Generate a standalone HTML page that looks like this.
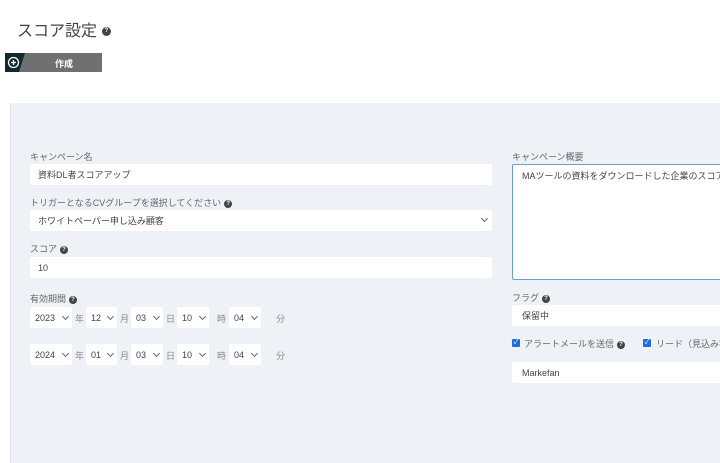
<!DOCTYPE html>
<html><head><meta charset="utf-8"><style>
*{box-sizing:border-box;margin:0;padding:0}
body{width:720px;height:456px;overflow:hidden;background:#fff;font-family:"Liberation Sans","Noto Sans CJK JP",sans-serif;color:#333;position:relative}
.a{position:absolute}
.lbl{position:absolute;font-size:9px;color:#666;white-space:nowrap}
.in{position:absolute;background:#fff;border-radius:2px;font-size:9px;color:#444;padding-left:8px;display:flex;align-items:center;white-space:nowrap;overflow:hidden}
.s{padding-left:5px}
.q{display:inline-block;width:8px;height:8px;border-radius:50%;background:#444;color:#fff;font-size:6px;line-height:8px;text-align:center;font-weight:bold;vertical-align:middle;margin-left:3px}
.chev{position:absolute;width:5px;height:5px;border-right:1px solid #666;border-bottom:1px solid #666;transform:rotate(45deg)}
.u{position:absolute;font-size:9px;color:#888}
.cb{position:absolute;width:8px;height:8px;background:#1a6fd8;border-radius:1px;color:#fff;font-size:7px;line-height:8px;text-align:center}
</style></head><body>
<div class="a" style="left:17px;top:17px;font-size:16px;color:#444">スコア設定<span class="q" style="width:9px;height:9px;line-height:9px;margin-left:5px">?</span></div>
<div class="a" style="left:5px;top:53px;width:97px;height:19px;background:#6e7072"></div>
<div class="a" style="left:5px;top:53px;width:20px;height:19px;background:#13292f;clip-path:polygon(0 0,100% 0,70% 100%,0 100%)"></div>
<svg class="a" style="left:7px;top:56px" width="13" height="13" viewBox="0 0 13 13"><circle cx="6.5" cy="6.5" r="5" fill="none" stroke="#fff" stroke-width="1.3"/><path d="M6.5 4v5M4 6.5h5" stroke="#fff" stroke-width="1.3"/></svg>
<div class="a" style="left:55px;top:57px;font-size:9px;color:#fff;font-weight:bold">作成</div>

<div class="a" style="left:10px;top:103px;width:720px;height:360px;background:#eef2f7;border-left:1px solid #e2e6ea"></div>

<div class="lbl" style="left:30px;top:150px">キャンペーン名</div>
<div class="in" style="left:30px;top:164px;width:462px;height:21px">資料DL者スコアアップ</div>
<div class="lbl" style="left:30px;top:196px">トリガーとなるCVグループを選択してください<span class="q">?</span></div>
<div class="in" style="left:30px;top:210px;width:462px;height:21px">ホワイトペーパー申し込み顧客</div>
<div class="chev" style="left:482px;top:216px"></div>
<div class="lbl" style="left:30px;top:242px">スコア<span class="q">?</span></div>
<div class="in" style="left:30px;top:257px;width:462px;height:21px">10</div>
<div class="lbl" style="left:30px;top:292px">有効期間<span class="q">?</span></div>

<div class="in s" style="left:30px;top:307px;width:42px;height:21px">2023</div><div class="chev" style="left:63px;top:314px"></div><div class="u" style="left:75px;top:312px">年</div>
<div class="in s" style="left:86px;top:307px;width:31px;height:21px">12</div><div class="chev" style="left:108px;top:314px"></div><div class="u" style="left:120px;top:312px">月</div>
<div class="in s" style="left:131px;top:307px;width:32px;height:21px">03</div><div class="chev" style="left:154px;top:314px"></div><div class="u" style="left:166px;top:312px">日</div>
<div class="in s" style="left:177px;top:307px;width:32px;height:21px">10</div><div class="chev" style="left:200px;top:314px"></div><div class="u" style="left:217px;top:312px">時</div>
<div class="in s" style="left:229px;top:307px;width:32px;height:21px">04</div><div class="chev" style="left:252px;top:314px"></div><div class="u" style="left:276px;top:312px">分</div>

<div class="in s" style="left:30px;top:344px;width:42px;height:21px">2024</div><div class="chev" style="left:63px;top:351px"></div><div class="u" style="left:75px;top:349px">年</div>
<div class="in s" style="left:86px;top:344px;width:31px;height:21px">01</div><div class="chev" style="left:108px;top:351px"></div><div class="u" style="left:120px;top:349px">月</div>
<div class="in s" style="left:131px;top:344px;width:32px;height:21px">03</div><div class="chev" style="left:154px;top:351px"></div><div class="u" style="left:166px;top:349px">日</div>
<div class="in s" style="left:177px;top:344px;width:32px;height:21px">10</div><div class="chev" style="left:200px;top:351px"></div><div class="u" style="left:217px;top:349px">時</div>
<div class="in s" style="left:229px;top:344px;width:32px;height:21px">04</div><div class="chev" style="left:252px;top:351px"></div><div class="u" style="left:276px;top:349px">分</div>

<div class="lbl" style="left:512px;top:150px">キャンペーン概要</div>
<div class="a" style="left:512px;top:164px;width:220px;height:116px;background:#fff;border:1px solid #6a9fd4;border-radius:2px;font-size:9px;color:#444;padding:4px 9px;white-space:nowrap;overflow:hidden">MAツールの資料をダウンロードした企業のスコアアップ</div>
<div class="lbl" style="left:512px;top:291px">フラグ<span class="q">?</span></div>
<div class="in" style="left:512px;top:305px;width:220px;height:21px;padding-left:10px">保留中</div>
<div class="cb" style="left:512px;top:339px">✓</div>
<div class="lbl" style="left:524px;top:337px;font-size:9px;color:#666">アラートメールを送信<span class="q">?</span></div>
<div class="cb" style="left:643px;top:339px">✓</div>
<div class="lbl" style="left:656px;top:337px;font-size:9px;color:#666">リード（見込み客）</div>
<div class="in" style="left:512px;top:362px;width:220px;height:21px;padding-left:10px">Markefan</div>
</body></html>
